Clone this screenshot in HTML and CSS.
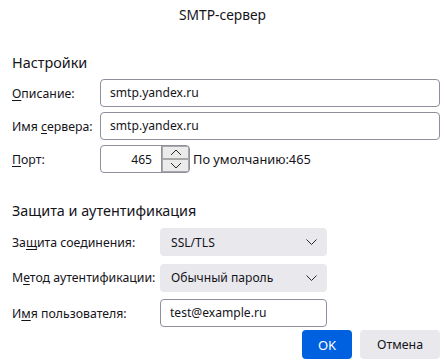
FILE: index.html
```html
<!DOCTYPE html>
<html lang="ru">
<head>
    <meta charset="UTF-8">
    <title>SMTP-сервер</title>
    <link rel="stylesheet" href="styles.css">
</head>
<body>

<div class="dialog">
    <div class="dialog-title">SMTP-сервер</div>

    <h2 class="section-title first">Настройки</h2>
    <div class="form-grid settings">
        <label class="field-label"><u>О</u>писание:</label>
        <div class="text-field">smtp.yandex.ru</div>

        <label class="field-label">Имя <u>с</u>ервера:</label>
        <div class="text-field">smtp.yandex.ru</div>

        <label class="field-label"><u>П</u>орт:</label>
        <div class="port-row">
            <div class="port-field">
                <span class="port-value">465</span>
                <div class="spinner">
                    <div class="spin-btn">
                        <svg width="12" height="7" viewBox="0 0 12 7"><path d="M1 6 L6 1 L11 6" fill="none" stroke="#2b2b2b" stroke-width="1"/></svg>
                    </div>
                    <div class="spin-btn">
                        <svg width="12" height="7" viewBox="0 0 12 7"><path d="M1 1 L6 6 L11 1" fill="none" stroke="#2b2b2b" stroke-width="1"/></svg>
                    </div>
                </div>
            </div>
            <span class="port-default">По умолчанию:465</span>
        </div>
    </div>

    <h2 class="section-title second">Защита и аутентификация</h2>
    <div class="form-grid security">
        <label class="field-label">За<u>щ</u>ита соединения:</label>
        <div class="select-field">
            <span>SSL/TLS</span>
            <svg width="11" height="6" viewBox="0 0 11 6"><path d="M0.5 0.5 L5.5 5.5 L10.5 0.5" fill="none" stroke="#2b2b2b" stroke-width="1"/></svg>
        </div>

        <label class="field-label">М<u>е</u>тод аутентификации:</label>
        <div class="select-field">
            <span>Обычный пароль</span>
            <svg width="11" height="6" viewBox="0 0 11 6"><path d="M0.5 0.5 L5.5 5.5 L10.5 0.5" fill="none" stroke="#2b2b2b" stroke-width="1"/></svg>
        </div>

        <label class="field-label">И<u>м</u>я пользователя:</label>
        <div class="text-field">test@example.ru</div>
    </div>

    <div class="dialog-buttons">
        <button class="btn btn-primary">OK</button>
        <button class="btn">Отмена</button>
    </div>
</div>

</body>
</html>
```

FILE: styles.css
```css
body {
    margin: 0;
    background: #fff;
    font-family: "Noto Sans", "Open Sans", sans-serif;
    color: #15141a;
}

.dialog {
    width: 445px;
    height: 363px;
    box-sizing: border-box;
    padding: 0 5px 0 12px;
}

.dialog-title {
    height: 30px;
    line-height: 30px;
    text-align: center;
    font-size: 13.8px;
    margin-left: -7px;
}

.section-title {
    margin: 0;
    font-size: 14.4px;
    font-weight: 400;
    height: 22px;
    line-height: 22px;
}

.section-title.first {
    margin-top: 22px;
    margin-bottom: 5px;
}

.section-title.second {
    margin-top: 27px;
    margin-bottom: 6px;
}

.form-grid {
    display: grid;
    align-items: center;
}

.settings {
    grid-template-columns: 88px 1fr;
    row-gap: 5px;
}

.security {
    grid-template-columns: 148px 167px;
    row-gap: 7.5px;
}

.field-label {
    font-size: 12.3px;
    white-space: nowrap;
}

.field-label u {
    text-decoration-thickness: 1px;
    text-underline-offset: 2px;
}

.text-field {
    height: 28px;
    box-sizing: border-box;
    border: 1px solid #8f8f9d;
    border-radius: 4px;
    padding: 0 9px;
    font-size: 12.1px;
    line-height: 26px;
}

.port-row {
    display: flex;
    align-items: center;
    height: 28px;
}

.port-field {
    width: 90px;
    height: 28px;
    box-sizing: border-box;
    border: 1px solid #8f8f9d;
    border-radius: 4px;
    display: flex;
    align-items: center;
}

.port-value {
    flex: 1;
    text-align: right;
    padding-right: 9px;
    font-size: 12.1px;
}

.spinner {
    width: 27px;
    height: 26px;
    display: flex;
    flex-direction: column;
    border-left: 1px solid #8f8f9d;
}

.spin-btn {
    flex: 1;
    display: flex;
    align-items: center;
    justify-content: center;
    background: #ebebeb;
    border: 1px solid #a8a8a8;
    box-sizing: border-box;
}

.port-default {
    margin-left: 3px;
    font-size: 12.8px;
}

.select-field {
    height: 28px;
    box-sizing: border-box;
    background: #e9e9ed;
    border-radius: 4px;
    display: flex;
    align-items: center;
    justify-content: space-between;
    padding: 0 10px 0 11px;
    font-size: 12.1px;
}

.dialog-buttons {
    display: flex;
    justify-content: flex-end;
    gap: 8px;
    margin-top: 3px;
}

.btn {
    height: 29px;
    border: none;
    border-radius: 4px;
    background: #e9e9ed;
    color: #15141a;
    font-family: "Noto Sans", "Open Sans", sans-serif;
    font-size: 12.4px;
    padding: 0;
    width: 80px;
}

.btn-primary {
    width: 50px;
    background: #0061e0;
    color: #fff;
    font-size: 13px;
}
```
